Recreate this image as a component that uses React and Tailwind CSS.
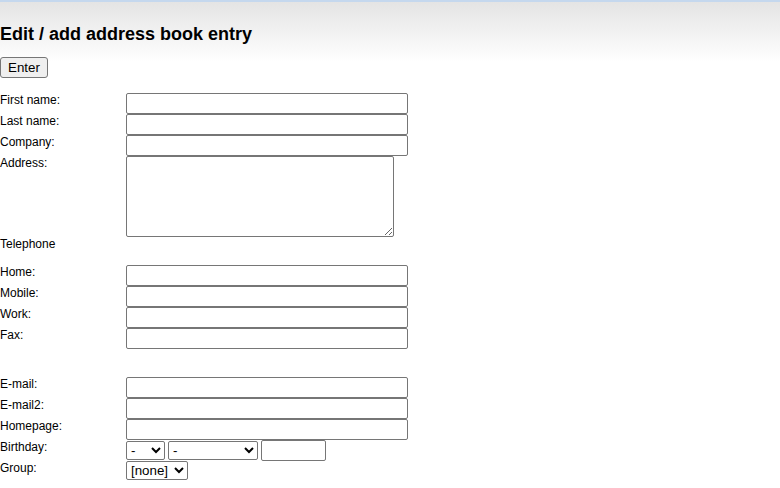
import { useState } from 'react';

const inputCls = 'block w-[282px] h-[21px] border border-[#767676] rounded-[2px] bg-white px-[2px] text-[13.33px]';
const selectCls = 'h-[19px] border border-[#767676] rounded-[2px] bg-white text-[13.33px] leading-[15px]';

function Row({ label, height = 'h-[21px]', children }) {
  return (
    <div className={`flex items-start ${height}`}>
      <label className="w-[126px] shrink-0 text-[12px] leading-[14px]">{label}</label>
      {children}
    </div>
  );
}

export default function App() {
  const [form, setForm] = useState({});
  const field = (name) => (
    <input
      type="text"
      className={inputCls}
      value={form[name] || ''}
      onChange={e => setForm({ ...form, [name]: e.target.value })}
    />
  );

  return (
    <div
      className="min-h-[488px] border-t-2 border-[#c5d8ee] bg-[linear-gradient(to_bottom,#e4e4e4,#ffffff_60px)] text-black"
      style={{ fontFamily: '"Liberation Sans", Arial, sans-serif' }}
    >
      <h1 className="mt-[22px] text-[18px] leading-[21px] font-bold">Edit / add address book entry</h1>
      <button className="mt-[12px] h-[21px] px-[7px] border border-[#767676] rounded-[3px] bg-[#efefef] text-[13.33px] leading-[15px]">
        Enter
      </button>

      <form className="mt-[14px]" onSubmit={e => e.preventDefault()}>
        <Row label="First name:">{field('firstname')}</Row>
        <Row label="Last name:">{field('lastname')}</Row>
        <Row label="Company:">{field('company')}</Row>
        <Row label="Address:" height="h-[81px]">
          <textarea className="block w-[268px] h-[81px] border border-[#767676] rounded-[2px] bg-white text-[13.33px]" />
        </Row>
        <Row label="Telephone" height="h-[28px]" />
        <Row label="Home:">{field('home')}</Row>
        <Row label="Mobile:">{field('mobile')}</Row>
        <Row label="Work:">{field('work')}</Row>
        <Row label="Fax:">{field('fax')}</Row>
        <div className="h-[28px]" />
        <Row label="E-mail:">{field('email')}</Row>
        <Row label="E-mail2:">{field('email2')}</Row>
        <Row label="Homepage:">{field('homepage')}</Row>
        <Row label="Birthday:">
          <div className="flex items-center gap-[3px] h-[21px]">
            <select className={`${selectCls} w-[39px]`}>
              <option>-</option>
            </select>
            <select className={`${selectCls} w-[90px]`}>
              <option>-</option>
            </select>
            <input type="text" className="w-[65px] h-[21px] border border-[#767676] rounded-[2px] bg-white text-[13.33px]" />
          </div>
        </Row>
        <Row label="Group:" height="h-[19px]">
          <select className={`${selectCls} w-[62px]`}>
            <option>[none]</option>
          </select>
        </Row>
      </form>
    </div>
  );
}
